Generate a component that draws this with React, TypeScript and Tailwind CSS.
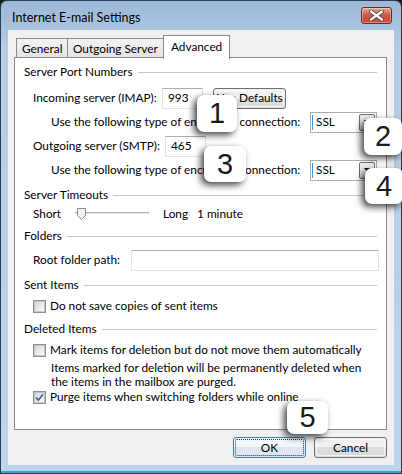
import type { ReactNode } from 'react';

const FONT = { fontFamily: 'Lato, "Noto Sans", Arial, sans-serif' };

function GroupHeader({ children }: { children: ReactNode }) {
  return (
    <div className="flex h-[20px] items-center whitespace-nowrap">
      <span>{children}</span>
      <div className="ml-[5px] h-px flex-1 bg-[#c8c8c8]" />
    </div>
  );
}

function TextBox({ value, className = '' }: { value?: string; className?: string }) {
  return (
    <div
      className={`flex h-[21px] items-center border border-[#e2e3ea] border-t-[#abadb3] bg-white pl-[5px] ${className}`}
    >
      {value}
    </div>
  );
}

function Combo() {
  return (
    <div className="ml-auto flex h-[21px] w-[67px] shrink-0 items-center border border-[#acacac] bg-white pl-px pr-px">
      <div className="h-[15px] w-px bg-[#3399ff]" />
      <span className="ml-[3px] flex-1">SSL</span>
      <div className="flex h-[17px] w-[16px] items-center justify-center rounded-[2px] border border-[#707070] bg-gradient-to-b from-[#f2f2f2] to-[#d5d5d5]">
        <svg width="7" height="4" viewBox="0 0 7 4">
          <path d="M0 0h7L3.5 4z" fill="#000" />
        </svg>
      </div>
    </div>
  );
}

function CheckBox({ checked = false }: { checked?: boolean }) {
  return (
    <div className="flex h-[13px] w-[13px] shrink-0 items-center justify-center border border-[#8e8f8f] bg-white">
      <div className="relative flex h-[11px] w-[11px] items-center justify-center border border-[#c2c4c8] bg-gradient-to-br from-[#d4d7db] to-[#fbfbfb]">
        {checked && (
          <svg width="9" height="9" viewBox="0 0 9 9" className="absolute">
            <path d="M1 4.5 3.4 7.2 8 1.2" fill="none" stroke="#4a5f97" strokeWidth="1.8" />
          </svg>
        )}
      </div>
    </div>
  );
}

function Button({ children, focused = false }: { children: ReactNode; focused?: boolean }) {
  return (
    <div
      className={`flex h-[21px] w-[73px] items-center justify-center whitespace-nowrap rounded-[3px] border ${
        focused
          ? 'border-[#3c7fb1] bg-gradient-to-b from-[#f4f8fb] from-50% to-[#dde6ee] to-50%'
          : 'border-[#707070] bg-gradient-to-b from-[#f2f2f2] from-50% to-[#dcdcdc] to-50%'
      } p-[1px]`}
    >
      <div
        className={`flex h-full w-full items-center justify-center rounded-[2px] ${
          focused ? 'border border-dotted border-[#333]' : 'border border-[#fcfcfc]/70'
        }`}
      >
        {children}
      </div>
    </div>
  );
}

function Badge({ n, className }: { n: string; className: string }) {
  return (
    <div
      className={`absolute flex items-center justify-center rounded-[7px] bg-white text-[29px] leading-none text-[#1a1a1a] shadow-[-3px_3px_7px_rgba(0,0,0,0.75)] ${className}`}
      style={{ fontFamily: '"Liberation Sans", Arial, sans-serif' }}
    >
      {n}
    </div>
  );
}

export default function App() {
  return (
    <div className="h-[474px] w-[402px] bg-[#1b1b1b]" style={FONT}>
      <div className="relative flex h-full flex-col rounded-t-[7px] border border-[#2c3e52] bg-gradient-to-b from-[#9bb8d8] via-[#b4cde7] via-10% to-[#bcd5ee] text-[11.8px] text-black">
        {/* title bar */}
        <div className="flex h-[29px] shrink-0 items-center justify-between pl-[11px] pr-[9px] pt-[5px]">
          <span className="whitespace-nowrap text-[12.5px]">Internet E-mail Settings</span>
          <div className="mb-[6px] flex h-[17px] w-[31px] items-center justify-center rounded-[3px] border border-[#6b2a24] bg-gradient-to-b from-[#e8a79c] via-[#c9553f] via-50% to-[#c64c3a] shadow-[inset_0_0_0_1px_rgba(255,255,255,0.35)]">
            <svg width="15" height="11" viewBox="0 0 15 11">
              <path d="M2 1.5 13 9.5M13 1.5 2 9.5" stroke="#4a4a4a" strokeWidth="4" strokeLinecap="round" />
              <path d="M2 1.5 13 9.5M13 1.5 2 9.5" stroke="#fff" strokeWidth="2.2" strokeLinecap="round" />
            </svg>
          </div>
        </div>

        {/* client area */}
        <div className="mx-[7px] flex h-[435px] shrink-0 flex-col whitespace-nowrap bg-[#f0f0f0]">
          {/* tabs */}
          <div className="mt-[5px] flex h-[23px] items-end pl-[8px]">
            <div className="flex h-[20px] w-[52px] items-center border border-b-0 border-[#898c95] bg-gradient-to-b from-[#f3f3f3] to-[#e3e3e3] pl-[5px] pt-px">
              General
            </div>
            <div className="flex h-[20px] w-[96px] items-center border border-b-0 border-l-0 border-[#898c95] bg-gradient-to-b from-[#f3f3f3] to-[#e3e3e3] pl-[5px] pt-px">
              Outgoing Server
            </div>
            <div className="relative z-10 -ml-px -mb-px flex h-[24px] w-[67px] items-center border border-b-0 border-[#898c95] bg-white pb-[2px] pl-[7px]">
              Advanced
            </div>
          </div>

          {/* panel */}
          <div className="-mt-px ml-[6px] flex h-[373px] w-[373px] flex-col border border-[#898c95] bg-white pl-[9px] pr-[9px]">
            <div className="mt-[4px]">
              <GroupHeader>Server Port Numbers</GroupHeader>
            </div>

            <div className="mt-[6px] flex h-[20px] items-center pl-[9px]">
              <span className="w-[129px] shrink-0">Incoming server (IMAP):</span>
              <TextBox value="993" className="w-[41px]" />
              <div className="ml-[10px]">
                <Button>
                  <span className="w-[78px] text-center">Use Defaults</span>
                </Button>
              </div>
            </div>

            <div className="mt-[4px] flex h-[20px] items-center pl-[27px]">
              <span>Use the following type of encrypted connection:</span>
              <Combo />
            </div>

            <div className="mt-[4px] flex h-[20px] items-center pl-[9px]">
              <span className="w-[132px] shrink-0">Outgoing server (SMTP):</span>
              <TextBox value="465" className="w-[41px]" />
            </div>

            <div className="mt-[4px] flex h-[20px] items-center pl-[27px]">
              <span>Use the following type of encrypted connection:</span>
              <Combo />
            </div>

            <div className="mt-[5px]">
              <GroupHeader>Server Timeouts</GroupHeader>
            </div>

            <div className="flex h-[18px] items-center pl-[9px]">
              <span className="w-[42px]">Short</span>
              <div className="relative h-[14px] w-[74px]">
                <div className="absolute left-0 right-0 top-[5px] h-[2px] border-t border-[#b0b0b0] border-b-white bg-[#e7eaea]" />
                <svg width="9" height="12" viewBox="0 0 9 12" className="absolute left-[2px] top-[1px]">
                  <path d="M0.5 0.5h8v7l-4 4-4-4z" fill="#f2f2f2" stroke="#8a8a8a" />
                </svg>
              </div>
              <span className="ml-[14px]">Long</span>
              <span className="ml-[9px]">1 minute</span>
            </div>

            <div className="mt-[3px]">
              <GroupHeader>Folders</GroupHeader>
            </div>

            <div className="mt-[4px] flex h-[20px] items-center pl-[9px]">
              <span className="w-[98px] shrink-0">Root folder path:</span>
              <TextBox className="-mr-[2px] flex-1" />
            </div>

            <div className="mt-[5px]">
              <GroupHeader>Sent Items</GroupHeader>
            </div>

            <div className="mt-[1px] flex h-[20px] items-center gap-[4px] pl-[9px]">
              <CheckBox />
              <span>Do not save copies of sent items</span>
            </div>

            <div className="mt-[3px]">
              <GroupHeader>Deleted Items</GroupHeader>
            </div>

            <div className="mt-[1px] flex h-[20px] items-center gap-[4px] pl-[9px]">
              <CheckBox />
              <span>Mark items for deletion but do not move them automatically</span>
            </div>

            <div className="mt-[1px] pl-[27px] leading-[14px]">
              Items marked for deletion will be permanently deleted when
              <br />
              the items in the mailbox are purged.
            </div>

            <div className="flex h-[16px] items-center gap-[4px] pl-[9px]">
              <CheckBox checked />
              <span>Purge items when switching folders while online</span>
            </div>
          </div>

          {/* buttons */}
          <div className="mt-[7px] flex justify-end gap-[8px] pr-[7px]">
            <Button focused>OK</Button>
            <Button>Cancel</Button>
          </div>
        </div>

        {/* bottom frame */}
        <div className="mt-auto h-[2px] bg-[#3aa0c4]" />

        <Badge n="1" className="left-[196px] top-[94px] h-[37px] w-[40px]" />
        <Badge n="2" className="left-[363px] top-[117px] h-[37px] w-[38px]" />
        <Badge n="3" className="left-[203px] top-[145px] h-[36px] w-[42px]" />
        <Badge n="4" className="left-[364px] top-[167px] h-[36px] w-[38px]" />
        <Badge n="5" className="left-[286px] top-[400px] h-[33px] w-[41px]" />
      </div>
    </div>
  );
}
